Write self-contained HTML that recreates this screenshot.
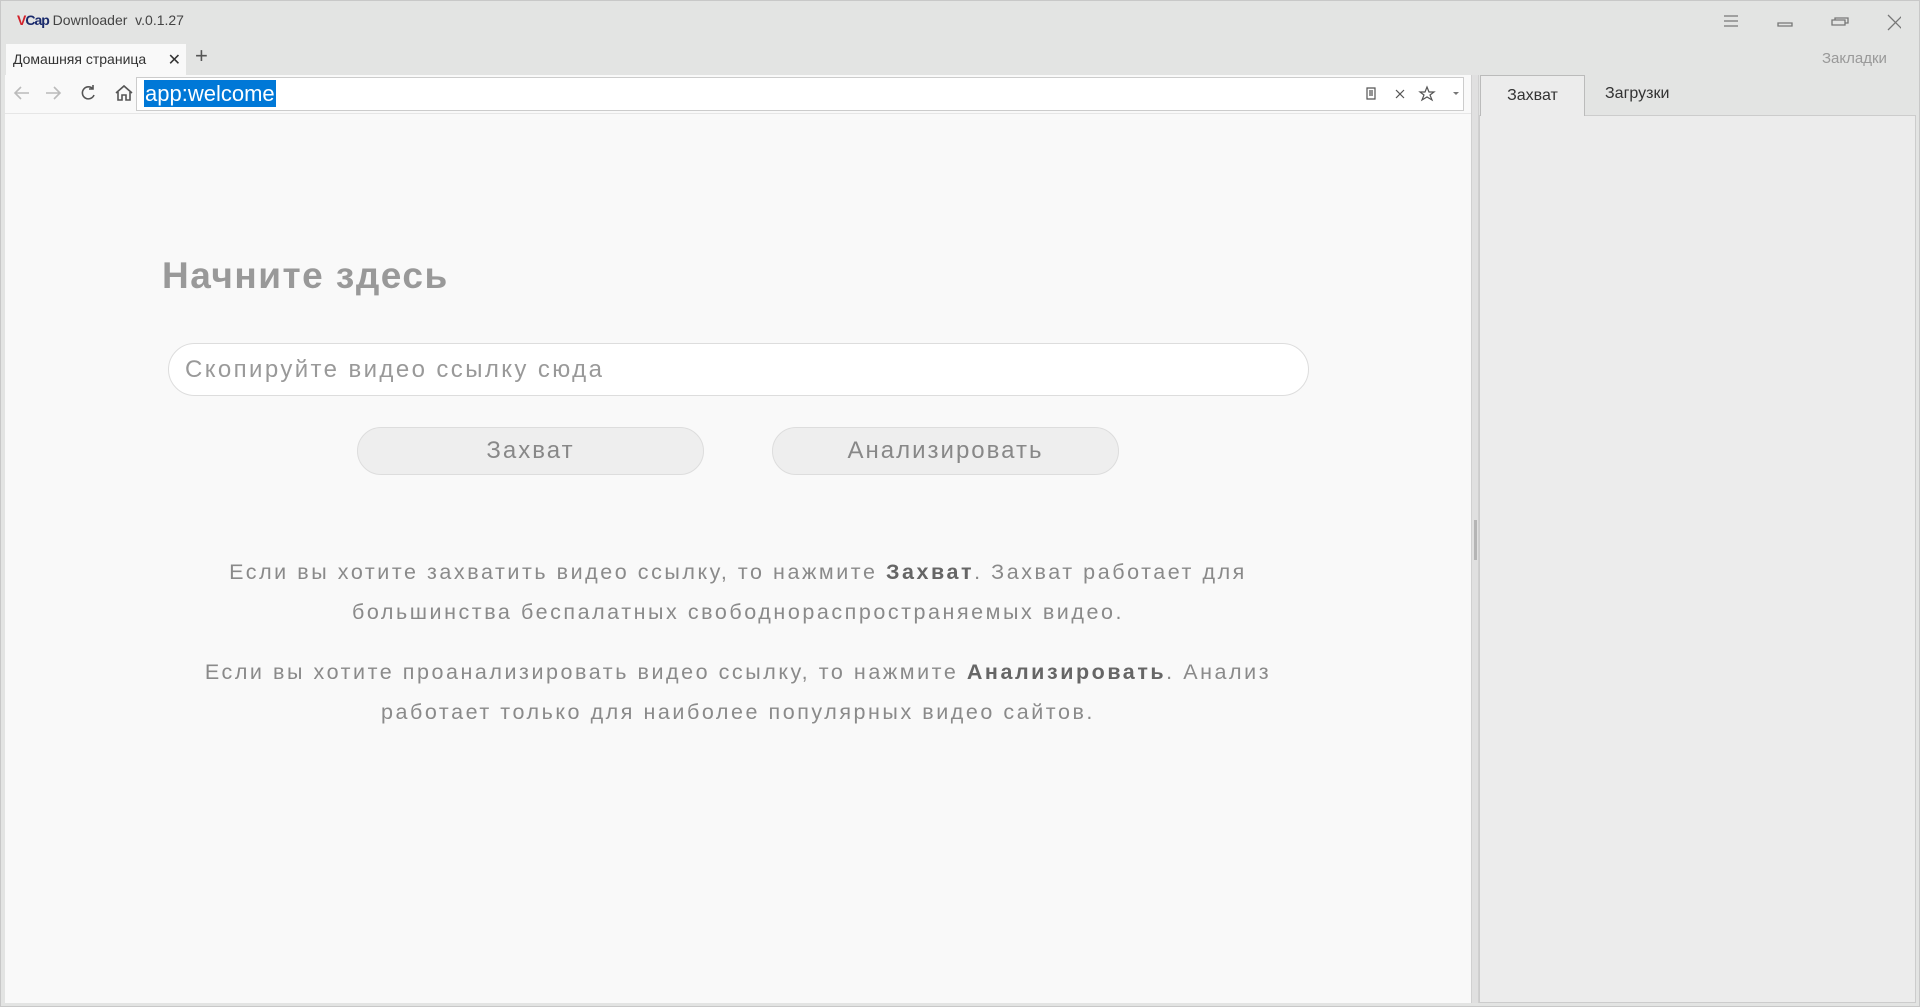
<!DOCTYPE html>
<html><head><meta charset="utf-8"><style>
*{box-sizing:border-box;margin:0;padding:0}
body{width:1920px;height:1007px;background:#e3e4e3;font-family:"Liberation Sans",sans-serif;position:relative;overflow:hidden;border:1px solid #c8c8c8}
.abs{position:absolute}
.title{left:16px;top:11px;font-size:14px;color:#444}
.title b{color:#d2202a;font-weight:bold;letter-spacing:-1px}
.title b span{color:#1a2a6c}
.tab{left:5px;top:43px;width:180px;height:31px;background:#f9f9f9;font-size:14px;color:#333;padding:7px 0 0 7px}
.tab .x{position:absolute;right:5px;top:6px;font-size:16px}
.plus{left:194px;top:42px;font-size:22px;color:#555}
.nav{left:4px;top:74px;width:1466px;height:38px;background:#f9f9f9}
.url{left:135px;top:76px;width:1328px;height:34px;background:#fff;border:1px solid #ccc}
.sel{left:143px;top:79px;height:27px;background:#0078d7;color:#fff;font-size:22px;padding:0 1px;line-height:27px}
.content{left:4px;top:112px;width:1466px;height:890px;background:#f9f9f9;border-top:1px solid #e6e6e6}
.split{left:1470px;top:74px;width:8px;height:928px;background:#e0e0e0;border-left:1px solid #d0d0d0;border-right:1px solid #d0d0d0}
.grip{left:1473px;top:519px;width:3px;height:40px;background:#b5b5b5}
.rp{left:1478px;top:114px;width:437px;height:888px;background:#ececec;border:1px solid #ccc}
.rtab{left:1479px;top:74px;width:105px;height:41px;background:#ececec;border:1px solid #bbb;border-bottom:none;font-size:16px;color:#333;text-align:center;line-height:40px}
.rtab2{left:1604px;top:84px;font-size:16px;color:#333}
.zak{left:1821px;top:49px;font-size:15px;color:#999}
h1{position:absolute;left:161px;top:254px;font-size:37px;color:#999;letter-spacing:1.5px;font-weight:bold}
.inp{left:167px;top:342px;width:1141px;height:53px;border:1px solid #ddd;border-radius:27px;background:#fff;font-size:24px;color:#999;letter-spacing:2.4px;padding:12px 0 0 16px}
.btn{top:426px;width:347px;height:48px;border:1px solid #ddd;border-radius:24px;background:#eee;color:#888;font-size:24px;letter-spacing:2px;text-align:center;line-height:46px}
.p{left:87px;width:1300px;text-align:center;font-size:21.5px;color:#8a8a8a;letter-spacing:2.55px;line-height:40px}
.p b{color:#666}
</style></head><body>
<div class="abs title"><b>V<span>Cap</span></b> Downloader &nbsp;v.0.1.27</div>
<svg class="abs" style="left:1720px;top:12px" width="180" height="20" viewBox="0 0 180 20" fill="none" stroke="#777" stroke-width="1.3">
<path d="M3 3h14M3 8h14M3 13h14"/><path d="M57 10h14v3H57z"/><path d="M111 7h13v5h-13zM114 7V5h13v5h-3"/><path d="M167 2l15 15M182 2l-15 15"/></svg>
<div class="abs tab">Домашняя страница<span class="x">✕</span></div>
<div class="abs plus">+</div>
<div class="abs zak">Закладки</div>
<div class="abs nav"></div>
<svg class="abs" style="left:12px;top:82px" width="120" height="20" viewBox="0 0 120 20" fill="none" stroke-width="1.6">
<path d="M16 10H2M8 4l-6 6 6 6" stroke="#bbb"/><path d="M33 10h14M41 4l6 6-6 6" stroke="#bbb"/>
<path d="M80 6a6 6 0 1 0 1 6M80 2v4h-4" stroke="#555"/>
<path d="M103 10l8-7 8 7M105 9v8h4v-5h4v5h4V9" stroke="#555"/></svg>
<div class="abs url"></div>
<div class="abs sel">app:welcome</div>
<svg class="abs" style="left:1363px;top:84px" width="100" height="18" viewBox="0 0 100 18" fill="none" stroke="#555" stroke-width="1.2">
<path d="M3 3h8v11H3zM5 6h4M5 8h4M5 10h4"/><path d="M32 5l8 8M40 5l-8 8"/>
<path d="M63 2l2 5h5l-4 3 2 5-5-3-5 3 2-5-4-3h5z"/><path d="M89 7h6l-3 3z" fill="#777" stroke="none"/></svg>
<div class="abs content"></div>
<div class="abs split"></div><div class="abs grip"></div>
<div class="abs rp"></div>
<div class="abs rtab">Захват</div>
<div class="abs rtab2">Загрузки</div>
<h1>Начните здесь</h1>
<div class="abs inp">Скопируйте видео ссылку сюда</div>
<div class="abs btn" style="left:356px">Захват</div>
<div class="abs btn" style="left:771px">Анализировать</div>
<div class="abs p" style="top:551px">Если вы хотите захватить видео ссылку, то нажмите <b>Захват</b>. Захват работает для<br>большинства беспалатных свободнораспространяемых видео.</div>
<div class="abs p" style="top:651px">Если вы хотите проанализировать видео ссылку, то нажмите <b>Анализировать</b>. Анализ<br>работает только для наиболее популярных видео сайтов.</div>
</body></html>
